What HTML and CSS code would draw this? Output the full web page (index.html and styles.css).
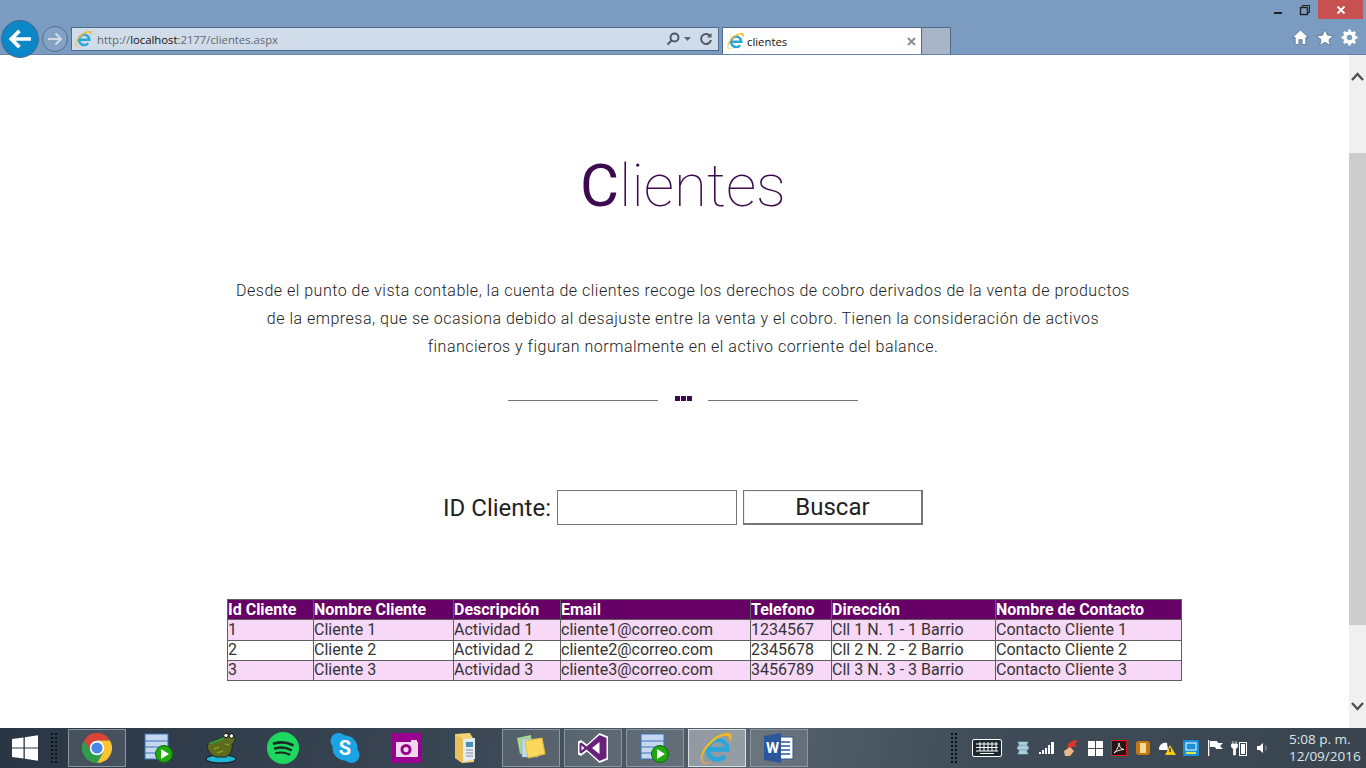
FILE: index.html
```html
<!DOCTYPE html>
<html lang="es">
<head>
    <meta charset="UTF-8">
    <title>clientes</title>
    <link rel="stylesheet" href="styles.css">
</head>
<body>
<div class="screen">

    <!-- Browser chrome -->
    <header class="chrome">
        <div class="win-buttons">
            <span class="win-btn"><svg width="10" height="10" viewBox="0 0 10 10"><rect x="1" y="7" width="8" height="2" fill="#222"/></svg></span>
            <span class="win-btn"><svg width="12" height="12" viewBox="0 0 12 12" fill="none" stroke="#222" stroke-width="1"><rect x="1.5" y="3.5" width="7" height="7" stroke-width="1.4"/><path d="M3.5 3V1.5H10.5V8.5H9"/></svg></span>
            <span class="win-close"><svg width="10" height="10" viewBox="0 0 10 10" stroke="#fff" stroke-width="1.8"><path d="M1.5 1.5L8.5 8.5M8.5 1.5L1.5 8.5"/></svg></span>
        </div>
        <div class="nav-row">
            <span class="back-btn"><svg width="24" height="22" viewBox="0 0 22 20" fill="none" stroke="#fff" stroke-width="3.4"><path d="M10.5 2.5L3 10L10.5 17.5M3.5 10H21"/></svg></span>
            <span class="forward-btn"><svg width="16" height="14" viewBox="0 0 16 14" fill="none" stroke="#d4dce6" stroke-width="2"><path d="M8.5 1.5L14 7L8.5 12.5M14 7H1"/></svg></span>
            <div class="address">
                <svg class="ie-small" width="18" height="18" viewBox="0 0 18 18"><use href="#ie"/></svg>
                <span class="url">http://<b>localhost</b>:2177/clientes.aspx</span>
                <svg class="addr-icon" width="14" height="14" viewBox="0 0 14 14" fill="none" stroke="#4d5a68" stroke-width="2"><circle cx="8.5" cy="5.5" r="4"/><path d="M5.5 8.5L1.5 12.5"/></svg>
                <svg class="addr-caret" width="7" height="4" viewBox="0 0 7 4"><path d="M0 0H7L3.5 4Z" fill="#5a6674"/></svg>
                <svg class="addr-icon" width="14" height="14" viewBox="0 0 14 14" fill="none" stroke="#4d5a68" stroke-width="2"><path d="M11.500 4.500A5 5 0 1 0 12 8"/><path d="M12.500 1V5.500H8" fill="#4d5a68" stroke="none"/></svg>
            </div>
            <div class="tab">
                <svg width="18" height="18" viewBox="0 0 18 18"><use href="#ie"/></svg>
                <span class="tab-title">clientes</span>
                <svg class="tab-close" width="9" height="9" viewBox="0 0 9 9" stroke="#8a8f96" stroke-width="2"><path d="M1 1L8 8M8 1L1 8"/></svg>
            </div>
            <div class="new-tab"></div>
            <div class="tools">
                <svg width="17" height="17" viewBox="0 0 16 16"><path d="M8 1L15.500 8H13V14.500H9.500V10H6.500V14.500H3V8H.5Z" fill="#fff" stroke="#4f6a8a" stroke-width=".7"/></svg>
                <svg width="18" height="17" viewBox="0 0 17 16"><path d="M8.500 .5L10.800 5.800L16.500 6.300L12.200 10L13.500 15.500L8.500 12.600L3.500 15.500L4.800 10L.5 6.300L6.200 5.800Z" fill="#fff" stroke="#4f6a8a" stroke-width=".7"/></svg>
                <svg width="17" height="17" viewBox="0 0 16 16"><circle cx="8" cy="8" r="4.400" fill="none" stroke="#fff" stroke-width="3"/><path d="M8 .5V15.500M.5 8H15.500M2.700 2.700L13.300 13.300M13.300 2.700L2.700 13.300" stroke="#fff" stroke-width="2.400"/><circle cx="8" cy="8" r="2.600" fill="#7b9cc0"/></svg>
            </div>
        </div>
    </header>

    <!-- Page -->
    <main class="viewport">
        <h1 class="title"><span class="initial">C</span>lientes</h1>
        <p class="intro">Desde el punto de vista contable, la cuenta de clientes recoge los derechos de cobro derivados de la venta de productos<br>de la empresa, que se ocasiona debido al desajuste entre la venta y el cobro. Tienen la consideración de activos<br>financieros y figuran normalmente en el activo corriente del balance.</p>

        <div class="divider">
            <span class="divider-line"></span>
            <span class="dots"><i></i><i></i><i></i></span>
            <span class="divider-line"></span>
        </div>

        <form class="search">
            <label for="idCliente">ID Cliente:</label>
            <input id="idCliente" type="text">
            <button type="button">Buscar</button>
        </form>

        <table class="grid">
            <tr>
                <th class="c1">Id Cliente</th>
                <th class="c2">Nombre Cliente</th>
                <th class="c3">Descripción</th>
                <th class="c4">Email</th>
                <th class="c5">Telefono</th>
                <th class="c6">Dirección</th>
                <th class="c7">Nombre de Contacto</th>
            </tr>
            <tr class="odd">
                <td>1</td><td>Cliente 1</td><td>Actividad 1</td><td>cliente1@correo.com</td><td>1234567</td><td>Cll 1 N. 1 - 1 Barrio</td><td>Contacto Cliente 1</td>
            </tr>
            <tr>
                <td>2</td><td>Cliente 2</td><td>Actividad 2</td><td>cliente2@correo.com</td><td>2345678</td><td>Cll 2 N. 2 - 2 Barrio</td><td>Contacto Cliente 2</td>
            </tr>
            <tr class="odd">
                <td>3</td><td>Cliente 3</td><td>Actividad 3</td><td>cliente3@correo.com</td><td>3456789</td><td>Cll 3 N. 3 - 3 Barrio</td><td>Contacto Cliente 3</td>
            </tr>
        </table>

        <div class="scrollbar">
            <svg class="arrow-up" width="13" height="9" viewBox="0 0 13 9" fill="none" stroke="#505050" stroke-width="2.400"><path d="M1 8L6.500 2L12 8"/></svg>
            <div class="thumb"></div>
            <svg class="arrow-down" width="13" height="9" viewBox="0 0 13 9" fill="none" stroke="#505050" stroke-width="2.400"><path d="M1 1L6.500 7L12 1"/></svg>
        </div>
    </main>

    <!-- Taskbar -->
    <footer class="taskbar">
        <span class="start"><svg width="26" height="26" viewBox="0 0 26 26" fill="#fff"><path d="M0 4L11.500 2.400V12.400H0ZM12.800 2.200L26 .3V12.400H12.800ZM0 13.600H11.500V23.600L0 22ZM12.800 13.600H26V25.700L12.800 23.800Z"/></svg></span>
        <span class="grip task-grip"></span>
        <span class="task boxed">
            <svg width="30" height="30" viewBox="0 0 30 30"><path d="M15 7.500H28A15 15 0 0 0 2 7.500L8.500 18.750A7.500 7.500 0 0 1 15 7.500Z" fill="#db4437"/><path d="M28 7.500A15 15 0 0 1 15 30L21.500 18.750L15 7.500Z" fill="#fbc531"/><path d="M2 7.500A15 15 0 0 0 15 30L21.500 18.750H8.500Z" fill="#2f9e4a"/><circle cx="15" cy="15" r="7.300" fill="#fff"/><circle cx="15" cy="15" r="5.600" fill="#4a86e8"/></svg>
        </span>
        <span class="task">
            <svg width="30" height="30" viewBox="0 0 30 30"><use href="#db-play"/></svg>
        </span>
        <span class="task">
            <svg width="32" height="32" viewBox="0 0 32 32"><ellipse cx="16" cy="27" rx="15" ry="4" fill="#1fb6d6" stroke="#111"/><path d="M2 13L10 8L19 5C20 1 26 1 29 4C31 7 30 10 27 12C28 17 26 22 21 25H11C5 23 2 18 2 13Z" fill="#5c6b1e" stroke="#222"/><circle cx="21" cy="3.500" r="2.200" fill="#fff" stroke="#111"/><circle cx="26.500" cy="4" r="2.200" fill="#fff" stroke="#111"/><path d="M4 12L19 6" stroke="#2f9a3a" stroke-width="2"/><path d="M9 17L14 15M12 21L18 19M20 12L24 13" stroke="#8f9a2c" stroke-width="1.500"/></svg>
        </span>
        <span class="task">
            <svg width="32" height="32" viewBox="0 0 32 32" fill="none"><circle cx="16" cy="16" r="16" fill="#1ed760"/><path d="M7 11.500C13 9.800 20 10.200 25.500 13" stroke="#1b2a22" stroke-width="2.800" stroke-linecap="round"/><path d="M8 16.500C13 15 19 15.400 24 18" stroke="#1b2a22" stroke-width="2.400" stroke-linecap="round"/><path d="M9 21C13.500 20 18 20.300 22.500 22.500" stroke="#1b2a22" stroke-width="2" stroke-linecap="round"/></svg>
        </span>
        <span class="task">
            <svg width="30" height="32" viewBox="0 0 30 32"><circle cx="8.500" cy="9" r="8" fill="#1ba3e4"/><circle cx="21.500" cy="23" r="8" fill="#1ba3e4"/><circle cx="15" cy="16" r="12.500" fill="#1ba3e4"/><text x="15" y="23" class="skype-s">S</text></svg>
        </span>
        <span class="task">
            <svg width="30" height="30" viewBox="0 0 30 30"><rect width="30" height="30" fill="#99008f"/><rect x="4" y="9" width="22" height="15" fill="#f2d8ee"/><rect x="19" y="7" width="6" height="2" fill="#f2d8ee"/><circle cx="14" cy="16.500" r="5.500" fill="#99008f"/><circle cx="14" cy="16.500" r="2.600" fill="#f2d8ee"/></svg>
        </span>
        <span class="task">
            <svg class="folder" width="24" height="32" viewBox="0 0 24 32"><path d="M1 2L16 1L20 8V30L8 31L1 26Z" fill="#f1d27a"/><path d="M9 7L21 6V27L9 30Z" fill="#e3ecee"/><rect x="12" y="10" width="7" height="5" fill="#4a8fb0"/><path d="M12 18H19M12 21H19M12 24H19" stroke="#7a8f9a"/><path d="M1 2L9 7V30L1 26Z" fill="#e8bf5a"/></svg>
        </span>
        <span class="task boxed">
            <svg width="32" height="32" viewBox="0 0 32 32"><path d="M2 6L16 3L17 20L5 22Z" fill="#a8d88a"/><rect x="7" y="7" width="16" height="18" fill="#bcdcf5" stroke="#7ab" stroke-width=".5"/><path d="M10 9L27 6L30 22L13 26Z" fill="#fbd75b" stroke="#e8b93a"/></svg>
        </span>
        <span class="task boxed">
            <svg width="32" height="32" viewBox="0 0 32 32"><path d="M22.500 1L31 4.500V27.500L22.500 31L10 19.500L4 24L1 22.500V9.500L4 8L10 12.500Z" fill="#fff"/><path d="M22.500 3L29.500 6V26L22.500 29L9.500 17.500L4.500 21.500L2.500 20.500V11.500L4.500 10.500L9.500 14.500ZM22.500 10L15 16L22.500 22ZM4.500 13.500V18.500L7.500 16Z" fill="#68217a" fill-rule="evenodd"/></svg>
        </span>
        <span class="task boxed">
            <svg width="30" height="30" viewBox="0 0 30 30"><use href="#db-play"/></svg>
        </span>
        <span class="task boxed active">
            <svg width="34" height="34" viewBox="0 0 18 18"><use href="#ie"/></svg>
        </span>
        <span class="task boxed">
            <svg width="30" height="32" viewBox="0 0 30 32"><rect x="12" y="5" width="17" height="22" fill="#fff" stroke="#2b579a"/><path d="M16 10H26M16 14H26M16 18H26M16 22H26" stroke="#2b579a" stroke-width="1.400"/><path d="M0 4L17 1V31L0 28Z" fill="#2b579a"/><text x="8.500" y="21" class="word-w">W</text></svg>
        </span>

        <div class="tray">
            <span class="grip"></span>
            <svg class="kbd" width="30" height="18" viewBox="0 0 30 18"><rect x=".5" y=".5" width="29" height="17" rx="1.500" fill="#1d2730" stroke="#fff"/><path d="M4 5H26M4 8.500H26M4 12H26M8 3V12M12 3V12M16 3V12M20 3V12M24 3V12" stroke="#fff" fill="none"/><path d="M8 14.500H22" stroke="#fff"/></svg>
            <span class="tray-icon"><svg width="16" height="18" viewBox="0 0 18 18"><path d="M3 2H15L13 6L16 9L13 12L15 16H3L5 12L2 9L5 6Z" fill="#a9cfe0"/><path d="M3 6H15M3 11H15" stroke="#7fa3b5"/></svg></span>
            <span class="tray-icon"><svg width="16" height="14" viewBox="0 0 16 14" fill="#fff"><rect x="0" y="11" width="2" height="2"/><rect x="3" y="9" width="2" height="4"/><rect x="6" y="7" width="2" height="6"/><rect x="9" y="4" width="2" height="9"/><rect x="12" y="1" width="3" height="12"/></svg></span>
            <span class="tray-icon"><svg width="18" height="18" viewBox="0 0 18 18"><path d="M5 9C5 4 10 1 16 1L13 5L16 8C12 7 9 8 8 10Z" fill="#d8362a"/><path d="M2 12L8 8L12 12L8 17H3Z" fill="#e8b98a"/></svg></span>
            <span class="tray-icon"><svg width="15" height="15" viewBox="0 0 15 15" fill="#fff"><path d="M0 0H7V7H0ZM8 0H15V7H8ZM0 8H7V15H0ZM8 8H15V15H8Z"/></svg></span>
            <span class="tray-icon"><svg width="16" height="16" viewBox="0 0 16 16"><rect x=".5" y=".5" width="15" height="15" fill="#2a1512" stroke="#e01b1b"/><path d="M3 13C6 10 8 6 8 3C8 7 10 9 13 9.500C10 9.500 6 10.500 3 13Z" fill="none" stroke="#eee"/></svg></span>
            <span class="tray-icon"><svg width="14" height="14" viewBox="0 0 14 14"><rect width="14" height="14" rx="3" fill="#c9760f"/><rect x="4" y="2" width="6" height="10" fill="#f3dd9a"/></svg></span>
            <span class="tray-icon"><svg width="18" height="16" viewBox="0 0 18 16"><path d="M1 9C1 5 5 2 9 3L10 10H3C2 10 1 10 1 9Z" fill="#fff"/><path d="M12 5L18 15H7Z" fill="#f7c71c"/><rect x="11.500" y="8" width="1.200" height="4" fill="#222"/></svg></span>
            <span class="tray-icon"><svg width="16" height="16" viewBox="0 0 16 16"><rect width="16" height="16" rx="1" fill="#1a8fd8"/><rect x="3" y="3" width="10" height="7" fill="none" stroke="#fff"/><path d="M3 13H13" stroke="#d9e84a" stroke-width="2"/></svg></span>
            <span class="tray-icon"><svg width="15" height="16" viewBox="0 0 15 16" fill="#fff"><rect x="0" y="0" width="1.300" height="16"/><path d="M2 1H9L10 3H15L12 6L15 9H8L7 7H2Z"/></svg></span>
            <span class="tray-icon"><svg width="16" height="16" viewBox="0 0 16 16"><path d="M2 1V4M5 1V4M.5 4H6.500V7L4.500 9V15H2.500V9L.5 7Z" fill="#fff" stroke="#fff" stroke-width=".8"/><rect x="8.500" y="2.500" width="7" height="13" fill="none" stroke="#fff"/><rect x="10" y="4" width="4" height="10" fill="#fff"/></svg></span>
            <span class="tray-icon"><svg width="12" height="12" viewBox="0 0 12 12"><path d="M0 4H2.500L6 1V11L2.500 8H0Z" fill="#fff"/><path d="M8 3.500C9.500 5 9.500 7 8 8.500" fill="none" stroke="#9aa4ad"/></svg></span>
            <div class="clock">5:08 p. m.<br>12/09/2016</div>
        </div>
    </footer>
</div>

<svg class="defs" width="0" height="0">
    <defs>
        <symbol id="ie" viewBox="0 0 18 18">
            <path d="M4.200 9.800H14.400A5.200 5.200 0 1 0 13.200 13.200" fill="none" stroke="#2aa6dc" stroke-width="2.400"/>
            <path d="M3 8C6 3.500 12 .5 15.500 1.200C17.500 1.800 17 4 15.800 6C16 3 14.500 2 12 2.800C7 4.400 1.200 11 1.200 15C1.200 17 3.500 17.500 6.500 15.800C3.500 18.300 .2 17.500 .4 14.300C.6 12 1.500 10 3 8Z" fill="#f2b722"/>
        </symbol>
        <symbol id="db-play" viewBox="0 0 30 30">
            <rect x="1" y="1" width="23" height="25" fill="#c5d8ef" stroke="#3f72b8"/>
            <path d="M1 8H24M1 14H24M1 20H24" stroke="#3f72b8"/>
            <circle cx="20" cy="21" r="8.500" fill="#1fa80f" stroke="#0d6d08"/>
            <path d="M17 16L25 21L17 26Z" fill="#fff"/>
        </symbol>
    </defs>
</svg>
</body>
</html>
```

FILE: styles.css
```css
html, body { margin: 0; padding: 0; height: 100%; overflow: hidden; }
body { font-family: Roboto, "Liberation Sans", sans-serif; background: #fff; }
.screen { width: 1366px; height: 768px; display: flex; flex-direction: column; }
.defs { display: block; }

/* browser chrome */
.chrome { height: 55px; flex: none; box-sizing: border-box; background: #7b9cc0; border-bottom: 1px solid #6785a8; display: flex; flex-direction: column; font-family: "Open Sans", "Noto Sans", sans-serif; }
.win-buttons { height: 19px; flex: none; display: flex; justify-content: flex-end; margin-right: 3px; }
.win-btn { width: 27px; display: flex; align-items: center; justify-content: center; }
.win-close { width: 45px; background: #c75050; display: flex; align-items: center; justify-content: center; }
.nav-row { flex: 1; display: flex; align-items: flex-end; min-height: 0; position: relative; }
.back-btn { position: absolute; z-index: 1; left: 1px; top: 1px; width: 38px; height: 38px; box-sizing: border-box; border-radius: 50%; background: #0b86c7; border: 1px solid #46688e; display: flex; align-items: center; justify-content: center; }
.forward-btn { position: absolute; left: 42px; top: 7px; width: 26px; height: 26px; box-sizing: border-box; border-radius: 50%; border: 1px solid #4f6f94; background: #83a2c4; display: flex; align-items: center; justify-content: center; }
.address { margin-left: 71px; width: 648px; height: 24px; margin-bottom: 3px; box-sizing: border-box; background: #d0dce9; border: 1px solid #4f6a8a; display: flex; align-items: center; padding: 0 5px 0 3px; gap: 4px; }
.url { flex: 1; font-size: 11.300px; color: #5e6871; }
.url b { font-weight: 400; color: #111; }
.addr-icon { margin-left: 2px; }
.addr-caret { margin-right: 2px; }
.tab { margin-left: 3px; width: 200px; height: 27px; box-sizing: border-box; background: #fff; border: 1px solid #4f6a8a; border-bottom: none; display: flex; align-items: center; padding: 0 5px 0 4px; gap: 2px; }
.tab-title { flex: 1; font-size: 11.300px; color: #111; }
.new-tab { width: 29px; height: 27px; box-sizing: border-box; background: #a8b5c6; border: 1px solid #4f6a8a; border-left: none; border-bottom: none; }
.tools { margin-left: auto; display: flex; align-items: center; gap: 7px; height: 27px; margin-right: 8px; margin-bottom: 3px; }

/* page */
.viewport { flex: 1; position: relative; overflow: hidden; min-height: 0; background: #fff; }
.title { margin: 96px 0 0; text-align: center; font-size: 60px; line-height: 70px; font-weight: 100; color: #3c0a4e; }
.initial { font-weight: 400; }
.intro { margin: 56px 0 0; text-align: center; font-size: 16px; font-weight: 300; line-height: 28px; letter-spacing: .5px; color: #222; }
.divider { margin-top: 35px; display: flex; justify-content: center; align-items: center; height: 8px; }
.divider-line { width: 150px; height: 1px; background: #777; margin-top: 1px; }
.dots { width: 50px; display: flex; justify-content: center; gap: 1px; margin-top: -3px; }
.dots i { width: 5px; height: 5px; background: #3c0a4e; }
.search { margin-top: 86px; display: flex; justify-content: center; align-items: center; gap: 6px; font-size: 24px; color: #222; }
.search label { font-size: 24px; }
.search input { width: 180px; height: 35px; box-sizing: border-box; border: 1px solid #767676; padding: 0; background: #fff; }
.search button { width: 180px; height: 35px; box-sizing: border-box; font: inherit; color: #222; background: #fff; border: 1px solid #767676; border-width: 1px 2px 2px 1px; box-shadow: inset 1px 1px 0 #eee; padding: 0; }
.grid { margin: 74px 0 0 227px; width: 955px; border-collapse: collapse; font-size: 16px; table-layout: fixed; }
.grid th, .grid td { border: 1px solid #5f5f5f; padding: 0; text-align: left; height: 19.250px; line-height: 18px; color: #333; }
.grid th { background: #660066; color: #fff; font-weight: 700; }
.grid .odd td { background: #f7d8f7; }
.c1 { width: 85px; }
.c2 { width: 139px; }
.c3 { width: 106px; }
.c4 { width: 189px; }
.c5 { width: 80px; }
.c6 { width: 163px; }
.scrollbar { position: absolute; top: 0; right: 0; bottom: 0; width: 17px; background: #f0f0f0; }
.thumb { position: absolute; top: 98px; left: 0; right: 0; height: 472px; background: #cdcdcd; }
.arrow-up { position: absolute; top: 17px; left: 2px; }
.arrow-down { position: absolute; bottom: 17px; left: 2px; }

/* taskbar */
.taskbar { height: 40px; flex: none; display: flex; align-items: center; background: linear-gradient(100deg, #2a3644 0%, #3a4754 35%, #56616c 55%, #3f4c58 72%, #39444f 100%); font-family: "Open Sans", "Noto Sans", sans-serif; }
.start { width: 50px; display: flex; justify-content: center; }
.grip { width: 8px; height: 32px; flex: none; background-image: radial-gradient(#0c1116 1px, transparent 1.200px); background-size: 4px 4px; }
.task-grip { margin-right: 10px; }
.task { width: 58px; height: 38px; margin-right: 4px; box-sizing: border-box; display: flex; align-items: center; justify-content: center; border: 1px solid transparent; }
.task.boxed { border-color: #8a96a1; background: rgba(255,255,255,.12); }
.task.active { border-color: #d8dfe5; background: rgba(255,255,255,.38); }
.folder { margin-right: 6px; }
.skype-s { font: 700 20px Roboto, sans-serif; fill: #fff; text-anchor: middle; }
.word-w { font: 700 15px Roboto, sans-serif; fill: #fff; text-anchor: middle; }
.tray { margin-left: auto; display: flex; align-items: center; }
.kbd { margin: 0 9px 0 14px; }
.tray-icon { width: 24px; display: flex; justify-content: center; align-items: center; }
.clock { width: 59px; margin: 0 18px 0 14px; text-align: center; white-space: nowrap; font-size: 13.500px; line-height: 17px; color: #dfe4e8; }
```
